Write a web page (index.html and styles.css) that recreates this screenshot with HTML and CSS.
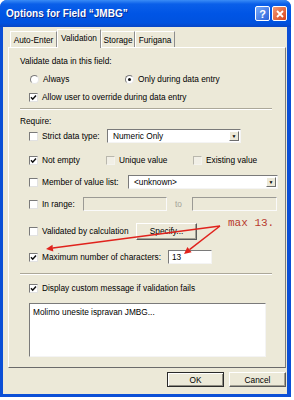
FILE: index.html
```html
<!DOCTYPE html>
<html lang="en">
<head>
    <meta charset="UTF-8">
    <meta name="viewport" content="width=device-width, initial-scale=1.0">
    <title>Options for Field "JMBG"</title>
    <link rel="stylesheet" href="styles.css">
</head>
<body>
    <div class="window">
        <div class="titlebar">
            <span class="title">Options for Field “JMBG”</span>
            <span class="tb-btn help">?</span>
            <span class="tb-btn close">
                <svg width="8" height="8" viewBox="0 0 8 8"><path d="M1 1 L7 7 M7 1 L1 7" stroke="#fff" stroke-width="1.8"/></svg>
            </span>
        </div>
        <div class="client">
            <div class="tabs">
                <span class="tab t-auto">Auto-Enter</span>
                <span class="tab t-valid active">Validation</span>
                <span class="tab t-storage">Storage</span>
                <span class="tab t-furigana">Furigana</span>
            </div>
            <div class="panel">
                <div class="row r-validate">Validate data in this field:</div>
                <div class="row r-always indent">
                    <span class="opt w-always"><span class="radio"></span>Always</span>
                    <span class="opt"><span class="radio on"></span>Only during data entry</span>
                </div>
                <div class="row r-allow indent">
                    <span class="opt"><span class="cb on"><svg width="7" height="7" viewBox="0 0 7 7"><polyline points="1,3.3 2.7,5.2 6,1.5" fill="none" stroke="#111" stroke-width="1.5"/></svg></span>Allow user to override during data entry</span>
                </div>
                <div class="sep s-top"></div>
                <div class="row r-require">Require:</div>
                <div class="row r-strict indent">
                    <span class="opt w-strict"><span class="cb"></span>Strict data type:</span>
                    <div class="select w-sel-strict"><span class="sel-text">Numeric Only</span><span class="sel-arrow">▼</span></div>
                </div>
                <div class="row r-notempty indent">
                    <span class="opt w-notempty"><span class="cb on"><svg width="7" height="7" viewBox="0 0 7 7"><polyline points="1,3.3 2.7,5.2 6,1.5" fill="none" stroke="#111" stroke-width="1.5"/></svg></span>Not empty</span>
                    <span class="opt w-unique"><span class="cb off"></span>Unique value</span>
                    <span class="opt"><span class="cb off"></span>Existing value</span>
                </div>
                <div class="row r-member indent">
                    <span class="opt w-member"><span class="cb"></span>Member of value list:</span>
                    <div class="select w-sel-member"><span class="sel-text">&lt;unknown&gt;</span><span class="sel-arrow">▼</span></div>
                </div>
                <div class="row r-range indent">
                    <span class="opt w-range"><span class="cb"></span>In range:</span>
                    <span class="field disabled w-range-field"></span>
                    <span class="to">to</span>
                    <span class="field disabled w-range-field2"></span>
                </div>
                <div class="row r-calc indent">
                    <span class="opt w-calc"><span class="cb"></span>Validated by calculation</span>
                    <span class="button specify">Specify...</span>
                </div>
                <div class="row r-max indent">
                    <span class="opt w-max"><span class="cb on"><svg width="7" height="7" viewBox="0 0 7 7"><polyline points="1,3.3 2.7,5.2 6,1.5" fill="none" stroke="#111" stroke-width="1.5"/></svg></span>Maximum number of characters:</span>
                    <span class="field w-max-field">13</span>
                </div>
                <div class="sep s-bottom"></div>
                <div class="row r-display indent">
                    <span class="opt"><span class="cb on"><svg width="7" height="7" viewBox="0 0 7 7"><polyline points="1,3.3 2.7,5.2 6,1.5" fill="none" stroke="#111" stroke-width="1.5"/></svg></span>Display custom message if validation fails</span>
                </div>
                <div class="message">Molimo unesite ispravan JMBG...</div>
            </div>
            <div class="actions">
                <span class="button default">OK</span>
                <span class="button">Cancel</span>
            </div>
        </div>

        <!-- red annotation drawn over the dialog -->
        <svg class="annotation" width="294" height="400" viewBox="0 0 294 400">
            <line x1="220" y1="226" x2="52.9" y2="248.1" stroke="#e0231d" stroke-width="1.5"/>
            <polygon points="46,249 53.3,251.4 52.5,244.8" fill="#e0231d"/>
            <line x1="220" y1="226" x2="189.5" y2="249.6" stroke="#e0231d" stroke-width="1.5"/>
            <polygon points="184,254 191.6,252.2 187.4,247" fill="#e0231d"/>
            <text x="228" y="226" class="note">max 13.</text>
        </svg>
    </div>
</body>
</html>
```

FILE: styles.css
```css
body {
    margin: 0;
    background: #fff;
    font-family: "Liberation Sans", Arial, sans-serif;
    font-size: 8.3px;
    color: #000;
}

.window {
    position: relative;
    width: 291px;
    height: 397px;
    background: #0b4fd6;
    border-radius: 7px 7px 0 0;
    display: flex;
    flex-direction: column;
    overflow: hidden;
}

.titlebar {
    height: 27px;
    flex: none;
    display: flex;
    align-items: center;
    padding: 0 4px 0 6px;
    background: linear-gradient(#3a8cf6, #0a5fe9 15%, #0055e5 50%, #0052df 85%, #0846c6);
}

.title {
    flex: 1;
    color: #fff;
    font-weight: bold;
    font-size: 10px;
    text-shadow: 1px 1px 0 #0a2a8a;
}

.tb-btn {
    width: 15px;
    height: 15px;
    box-sizing: border-box;
    border: 1px solid #fff;
    border-radius: 2px;
    display: flex;
    align-items: center;
    justify-content: center;
    margin-left: 2px;
}

.help {
    background: linear-gradient(135deg, #78aafa, #2b62d9);
    color: #fff;
    font-weight: bold;
    font-size: 11px;
}

.close {
    background: linear-gradient(135deg, #f29a74, #d6421b);
}

.client {
    flex: 1;
    margin: 0 4px 3px 3px;
    padding: 0 1px 0 5px;
    background: #ece9d8;
    display: flex;
    flex-direction: column;
}

/* tabs */
.tabs {
    height: 20px;
    flex: none;
    display: flex;
    align-items: flex-end;
    padding-left: 2px;
}

.tab {
    height: 16px;
    box-sizing: border-box;
    display: flex;
    align-items: center;
    justify-content: center;
    border-top: 1px solid #fff;
    border-left: 1px solid #fff;
    border-right: 1px solid #8d8d8d;
}

.tab.active {
    height: 19px;
    margin-bottom: -1px;
    background: #ece9d8;
    position: relative;
    z-index: 1;
    align-items: flex-start;
    padding-top: 3px;
}

.t-auto { width: 47px; }
.t-valid { width: 44px; }
.t-storage { width: 34px; }
.t-furigana { width: 40px; }

.panel {
    height: 321px;
    flex: none;
    box-sizing: border-box;
    border-top: 1px solid #fff;
    border-left: 1px solid #fff;
    border-right: 1px solid #7d7d7d;
    border-bottom: 1px solid #6a6a6a;
    padding: 6px 0 0 11px;
    display: flex;
    flex-direction: column;
}

.row {
    height: 14px;
    flex: none;
    display: flex;
    align-items: center;
}

.indent { padding-left: 9px; }

.r-always, .r-allow, .r-require { margin-top: 4px; }
.r-strict { height: 16px; }
.r-notempty { margin-top: 9px; }
.r-member { height: 16px; margin-top: 7px; }
.r-range { height: 16px; margin-top: 6px; }
.r-calc { height: 18px; margin-top: 10px; }
.r-max { height: 16px; margin-top: 9px; }
.r-display { margin-top: 6px; }

.sep {
    width: 252px;
    flex: none;
    border-top: 1px solid #aca899;
    border-bottom: 1px solid #fff;
}

.s-top { margin-top: 4px; }
.s-bottom { margin-top: 8px; }

.opt {
    display: flex;
    align-items: center;
    white-space: nowrap;
}

.w-always { width: 95px; }
.w-strict { width: 78px; }
.w-notempty { width: 77px; }
.w-unique { width: 87px; }
.w-member { width: 99px; }
.w-range { width: 54px; }
.w-calc { width: 107px; }
.w-max { width: 139px; }

/* checkbox and radio */
.cb {
    width: 9px;
    height: 9px;
    box-sizing: border-box;
    border: 1px solid;
    border-color: #7a7a7a #e2e2e2 #e2e2e2 #7a7a7a;
    background: #fff;
    margin-right: 4px;
    display: flex;
    align-items: center;
    justify-content: center;
}

.cb.off {
    border-color: #b9b7ad #f4f3ee #f4f3ee #b9b7ad;
    background: #f1efe6;
}

.radio {
    width: 9px;
    height: 9px;
    box-sizing: border-box;
    border-radius: 50%;
    border: 1px solid;
    border-color: #7a7a7a #e6e6e6 #e6e6e6 #7a7a7a;
    background: #fff;
    margin: 0 4px 0 1px;
    position: relative;
}

.radio.on::after {
    content: "";
    position: absolute;
    left: 2px;
    top: 2px;
    width: 3px;
    height: 3px;
    border-radius: 50%;
    background: #111;
}

/* fields */
.select, .field {
    height: 14px;
    box-sizing: border-box;
    border: 1px solid;
    border-color: #7a7a7a #f4f4f4 #f4f4f4 #7a7a7a;
    background: #fff;
    display: flex;
    align-items: center;
}

.select {
    justify-content: space-between;
    padding: 0 1px 0 5px;
}

.sel-arrow {
    width: 10px;
    height: 10px;
    box-sizing: border-box;
    background: #ece9d8;
    border: 1px solid;
    border-color: #fff #6d6d6d #6d6d6d #fff;
    font-size: 5px;
    line-height: 8px;
    text-align: center;
}

.w-sel-strict { width: 134px; }
.w-sel-member { width: 150px; }

.field.disabled {
    background: #ece9d8;
    border-color: #9b9a94 #fafafa #fafafa #9b9a94;
}

.w-range-field { width: 84px; }
.w-range-field2 { width: 85px; }
.w-max-field { width: 44px; padding-left: 3px; }

.to {
    width: 25px;
    padding-left: 8px;
    box-sizing: border-box;
    color: #a5a398;
}

.button {
    height: 15px;
    box-sizing: border-box;
    border: 1px solid;
    border-color: #fff #5a5a5a #5a5a5a #fff;
    box-shadow: inset -1px -1px 0 #a3a194;
    background: #ece9d8;
    display: flex;
    align-items: center;
    justify-content: center;
}

.specify {
    width: 61px;
    height: 17px;
}

.message {
    width: 237px;
    height: 54px;
    flex: none;
    margin: 8px 0 0 9px;
    box-sizing: border-box;
    border: 1px solid;
    border-color: #7a7a7a #f4f4f4 #f4f4f4 #7a7a7a;
    background: #fff;
    padding: 3px 3px;
}

.actions {
    display: flex;
    justify-content: flex-end;
    gap: 5px;
    margin-top: 4px;
}

.actions .button {
    width: 57px;
}

.button.default {
    border-color: #2a2a2a;
    box-shadow: inset 1px 1px 0 #fff, inset -1px -1px 0 #8f8d82;
}

.annotation {
    position: absolute;
    left: 0;
    top: 0;
    pointer-events: none;
}

.note {
    font-family: "Liberation Mono", "Courier New", monospace;
    font-size: 11px;
    fill: #b83a2e;
}
```
